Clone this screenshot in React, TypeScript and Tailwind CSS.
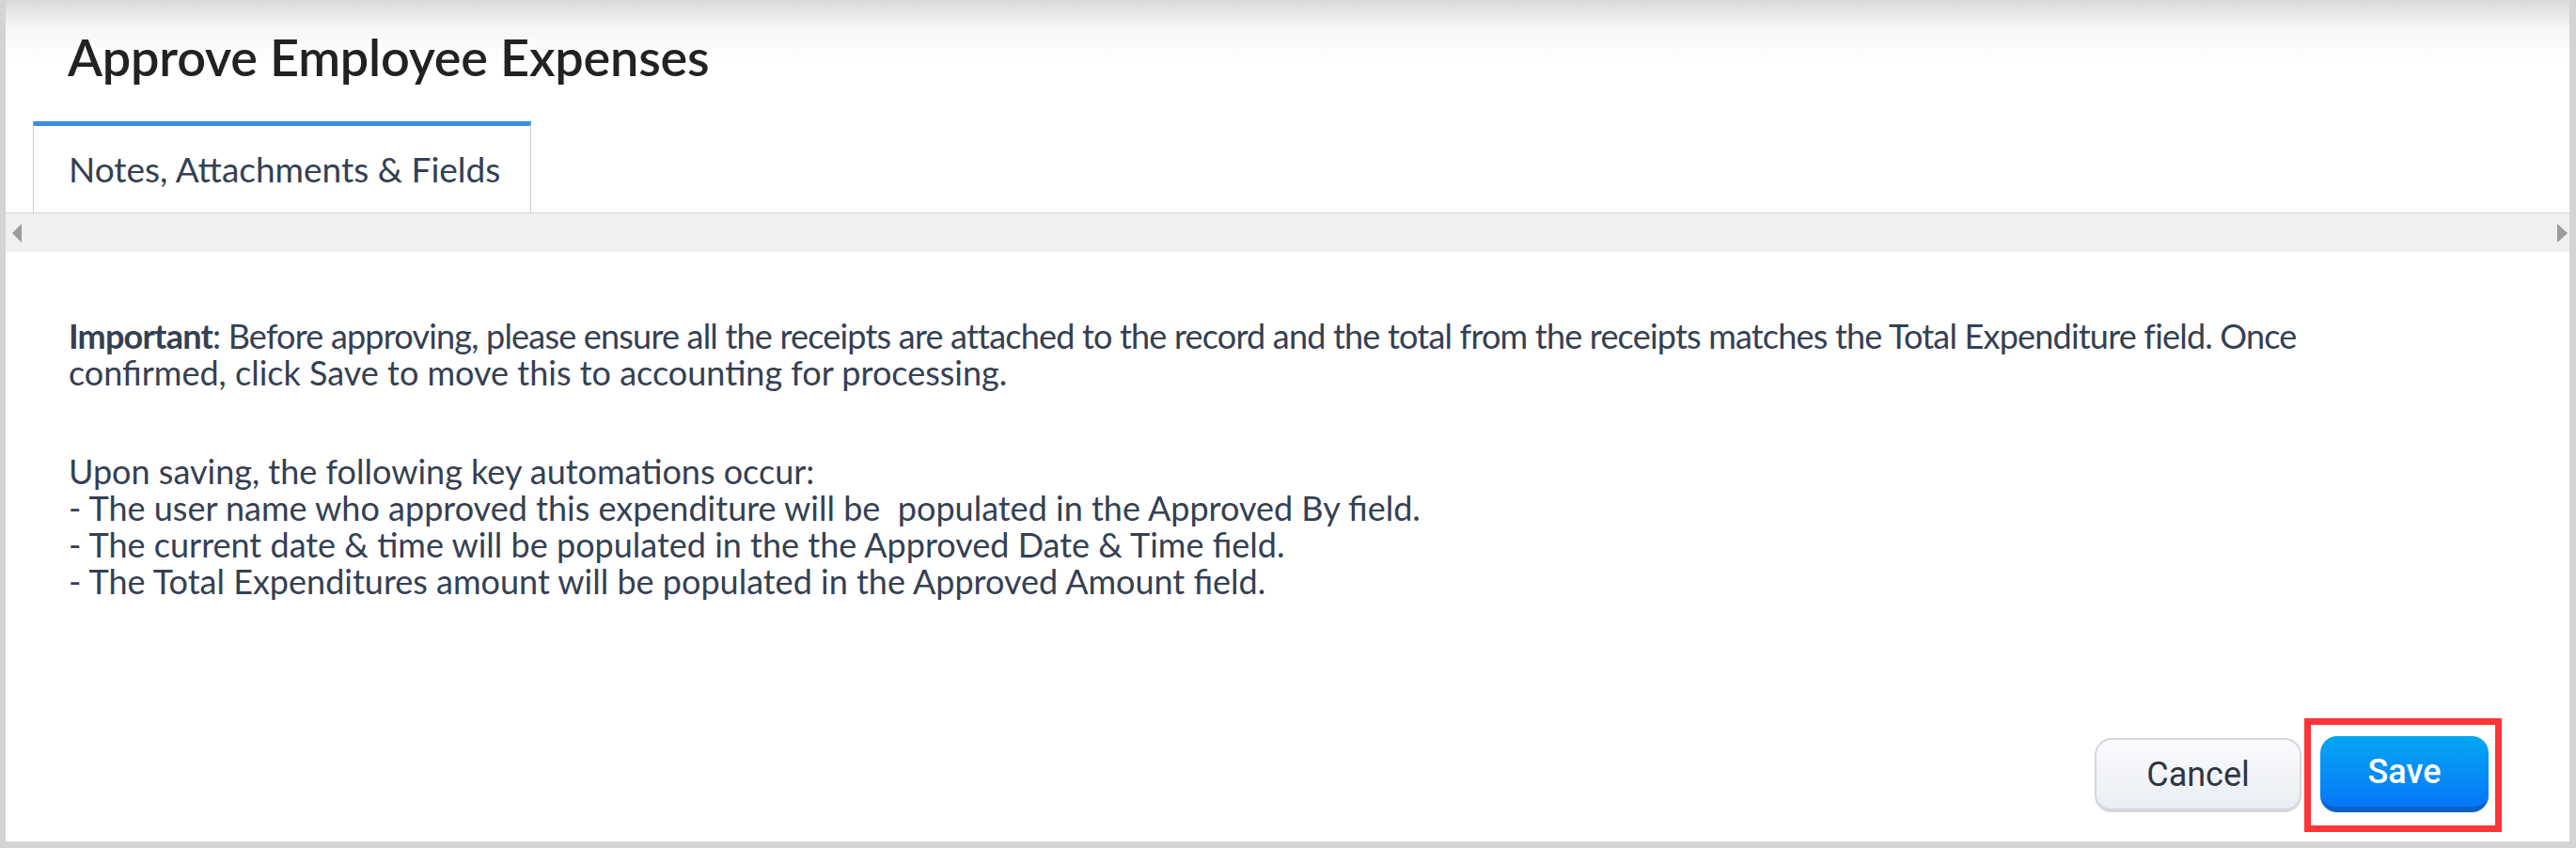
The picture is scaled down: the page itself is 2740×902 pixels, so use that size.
import React from 'react'

const bodyFont = { fontFamily: 'Lato, "Noto Sans", sans-serif' }

const automations = [
  '- The user name who approved this expenditure will be\u00a0 populated in the Approved By field.',
  '- The current date & time will be populated in the the Approved Date & Time field.',
  '- The Total Expenditures amount will be populated in the Approved Amount field.',
]

export default function App() {
  return (
    <div className="w-[2740px] h-[902px] bg-[#d4d4d4] pl-[6px] pr-[7px] pb-[7px]">
      <div className="h-full bg-white flex flex-col" style={bodyFont}>
        {/* Header */}
        <div className="bg-[linear-gradient(to_bottom,#d9d9d9_0px,#f6f6f6_30px,#ffffff_62px)] pt-[34px] pb-[41px] pl-[66px]">
          <h1 className="text-[54px] leading-[54px] font-semibold text-[#222222] tracking-[-0.2px]">
            Approve Employee Expenses
          </h1>
        </div>

        {/* Tabs */}
        <div className="flex border-b border-[#d2d6dc] pl-[29px]">
          <div className="w-[530px] h-[97px] border-t-[5px] border-t-[#3b8de6] border-x border-x-[#c9ced6] flex items-center pl-[37px] text-[37px] text-[#354052]">
            Notes, Attachments &amp; Fields
          </div>
        </div>

        {/* Scroller bar */}
        <div className="h-[41px] bg-[#f0f0f0] flex items-center justify-between pl-[7px] pr-[2px]">
          <svg width="11" height="20" viewBox="0 0 11 20">
            <polygon points="10,0 10,20 0,10" fill="#9b9b9b" />
          </svg>
          <svg width="11" height="20" viewBox="0 0 11 20">
            <polygon points="0,0 0,20 11,10" fill="#9b9b9b" />
          </svg>
        </div>

        {/* Body */}
        <div className="pl-[67px] pr-[40px] pt-[70px] text-[36px] leading-[39px] text-[#354052]">
          <p>
            <span className="tracking-[-0.8px] whitespace-nowrap">
              <span className="font-bold">Important</span>: Before approving, please ensure all the receipts are
              attached to the record and the total from the receipts matches the Total Expenditure field. Once
            </span>
            <br />
            confirmed, click Save to move this to accounting for processing.
          </p>
          <div className="mt-[66px]">
            <p>Upon saving, the following key automations occur:</p>
            {automations.map((line, i) => (
              <p key={i}>{line}</p>
            ))}
          </div>
        </div>

        {/* Footer */}
        <div className="mt-auto flex justify-end items-center gap-[3px] pr-[72px] pb-[10px]">
          <button
            className="w-[220px] h-[79px] rounded-[18px] border-2 border-[#d4d7dd] border-b-[4px] bg-[linear-gradient(to_bottom,#fbfbfd,#eaedf4)] text-[36px] text-[#2f3541]"
            style={{ fontFamily: 'Roboto, "Liberation Sans", sans-serif' }}
          >
            Cancel
          </button>
          <div className="border-[7px] border-[#ff3434] pl-[10px] pr-[7px] pt-[12px] pb-[14px]">
            <button
              className="w-[179px] h-[81px] rounded-[18px] border-b-[6px] border-[#0b62c6] bg-[linear-gradient(to_bottom,#04a6f3,#0778fa)] text-[36px] font-medium text-white flex items-center justify-center"
              style={{ fontFamily: 'Roboto, "Liberation Sans", sans-serif' }}
            >
              Save
            </button>
          </div>
        </div>
      </div>
    </div>
  )
}
